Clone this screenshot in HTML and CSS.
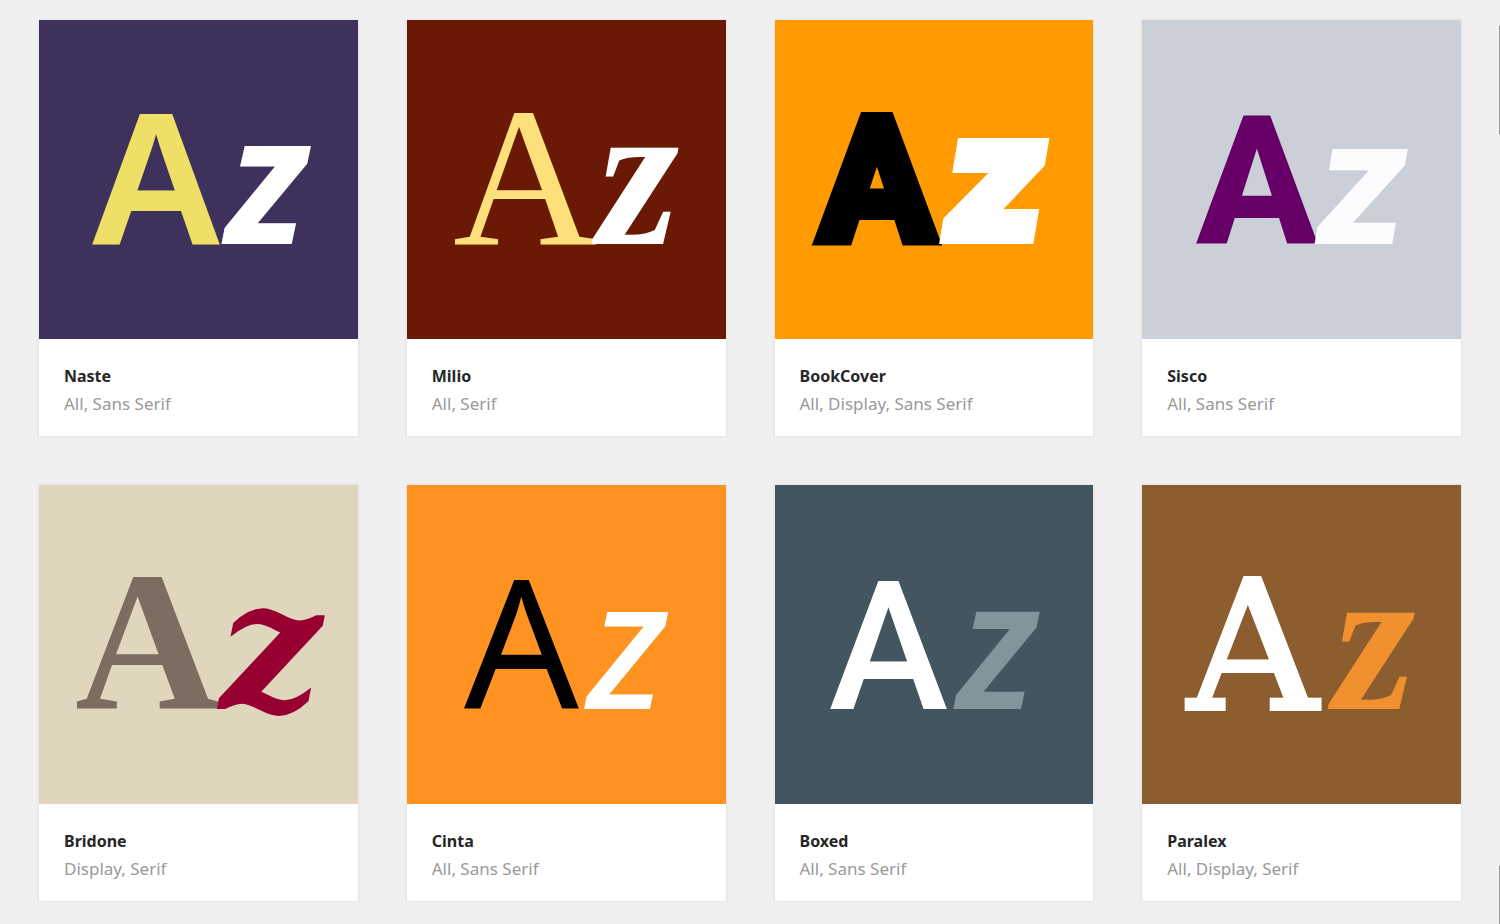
FILE: index.html
```html
<!DOCTYPE html>
<html lang="en">
  <head>
    <meta charset="UTF-8" />
    <meta name="viewport" content="width=device-width, initial-scale=1.0" />
    <title>Fonts</title>
    <link rel="stylesheet" href="styles.css">
  </head>
  <body>
    <main class="fonts">
      <a class="card" href="#naste">
        <div class="sample naste">
          <div class="letters"><span class="upper">A</span><span class="lower">z</span></div>
        </div>
        <div class="info">
          <h2>Naste</h2>
          <p>All, Sans Serif</p>
        </div>
      </a>
      <a class="card" href="#milio">
        <div class="sample milio">
          <div class="letters"><span class="upper">A</span><span class="lower">z</span></div>
        </div>
        <div class="info">
          <h2>Milio</h2>
          <p>All, Serif</p>
        </div>
      </a>
      <a class="card" href="#bookcover">
        <div class="sample bookcover">
          <div class="letters"><span class="upper">A</span><span class="lower">z</span></div>
        </div>
        <div class="info">
          <h2>BookCover</h2>
          <p>All, Display, Sans Serif</p>
        </div>
      </a>
      <a class="card" href="#sisco">
        <div class="sample sisco">
          <div class="letters"><span class="upper">A</span><span class="lower">z</span></div>
        </div>
        <div class="info">
          <h2>Sisco</h2>
          <p>All, Sans Serif</p>
        </div>
      </a>
      <a class="card" href="#bridone">
        <div class="sample bridone">
          <div class="letters"><span class="upper">A</span><span class="lower">z</span></div>
        </div>
        <div class="info">
          <h2>Bridone</h2>
          <p>Display, Serif</p>
        </div>
      </a>
      <a class="card" href="#cinta">
        <div class="sample cinta">
          <div class="letters"><span class="upper">A</span><span class="lower">z</span></div>
        </div>
        <div class="info">
          <h2>Cinta</h2>
          <p>All, Sans Serif</p>
        </div>
      </a>
      <a class="card" href="#boxed">
        <div class="sample boxed">
          <div class="letters"><span class="upper">A</span><span class="lower">z</span></div>
        </div>
        <div class="info">
          <h2>Boxed</h2>
          <p>All, Sans Serif</p>
        </div>
      </a>
      <a class="card" href="#paralex">
        <div class="sample paralex">
          <div class="letters"><span class="upper">A</span><span class="lower">z</span></div>
        </div>
        <div class="info">
          <h2>Paralex</h2>
          <p>All, Display, Serif</p>
        </div>
      </a>
    </main>
    <div class="edge edge-top"></div>
    <div class="edge edge-bottom"></div>
  </body>
</html>
```
FILE: styles.css
```css
* {
  box-sizing: border-box;
}

body {
  margin: 0;
  position: relative;
  background-color: #f0f0f0;
  font-family: "Noto Sans", "Open Sans", sans-serif;
}

.fonts {
  display: grid;
  grid-template-columns: repeat(4, 1fr);
  gap: 49px;
  padding: 20px 39px 23px;
}

.card {
  display: block;
  background-color: #fff;
  box-shadow: 0 0 3px rgba(0, 0, 0, 0.1);
  color: inherit;
  text-decoration: none;
}

.sample {
  display: flex;
  align-items: center;
  justify-content: center;
  aspect-ratio: 1;
}

/* the line takes its baseline from here, whatever the fonts of the letters */
.letters {
  font-family: Inter, sans-serif;
  font-size: 180px;
  line-height: 180px;
  white-space: nowrap;
}

.letters span {
  line-height: 0;
}

.lower {
  font-style: italic;
}

.naste {
  background-color: #3e315b;
}

.naste .upper {
  color: #eee067;
  font-family: "Liberation Sans", sans-serif;
  font-size: 190px;
  font-weight: 700;
}

.naste .lower {
  color: #fff;
  font-family: "Noto Sans", sans-serif;
  font-weight: 700;
}

.milio {
  background-color: #6a1904;
}

.milio .upper {
  color: #fee07b;
  font-family: "Liberation Serif", serif;
  font-size: 200px;
}

.milio .lower {
  color: #fff;
  font-family: "Liberation Serif", serif;
  font-size: 210px;
  font-weight: 700;
}

.bookcover {
  padding-bottom: 8px;
  background-color: #ff9a00;
}

.bookcover .upper {
  color: #000;
  font-family: Roboto, sans-serif;
  font-size: 170px;
  font-weight: 700;
  -webkit-text-stroke: 12px #000;
}

.bookcover .lower {
  margin-left: 8px;
  color: #fff;
  font-weight: 900;
  -webkit-text-stroke: 8px #fff;
}

.sisco {
  background-color: #cbcfd7;
}

.sisco .upper {
  color: #660066;
  font-family: Roboto, sans-serif;
  font-weight: 800;
}

.sisco .lower {
  color: #fcfbfe;
  font-family: Roboto, sans-serif;
  font-weight: 800;
}

.bridone {
  background-color: #e0d6bd;
}

.bridone .upper {
  color: #7c6d60;
  font-family: "Liberation Serif", serif;
  font-size: 200px;
  font-weight: 700;
}

.bridone .lower {
  color: #980032;
  font-family: "DejaVu Serif", serif;
  font-weight: 700;
}

.cinta {
  background-color: #ff9322;
}

.cinta .upper {
  color: #000;
  font-family: "Noto Sans", sans-serif;
}

.cinta .lower {
  margin-left: 8px;
  color: #fff;
  font-family: "Noto Sans", sans-serif;
  font-weight: 500;
}

.boxed {
  background-color: #43565f;
}

.boxed .upper {
  color: #fff;
  font-family: Roboto, sans-serif;
  font-weight: 500;
}

.boxed .lower {
  margin-left: 8px;
  color: #82959c;
  font-family: "Noto Sans", sans-serif;
  font-weight: 600;
}

.paralex {
  background-color: #8b5d2f;
}

.paralex .upper {
  color: #fff;
  font-family: "DejaVu Serif", serif;
  -webkit-text-stroke: 4px #fff;
}

.paralex .lower {
  margin-left: 16px;
  color: #f0902e;
  font-family: "Liberation Serif", serif;
  font-size: 210px;
  font-weight: 700;
}

.info {
  padding: 23px 25px 18px;
}

.info h2,
.info p {
  margin: 0;
  line-height: 28px;
}

.info h2 {
  color: #262626;
  font-size: 16px;
  font-weight: 700;
}

.info p {
  color: #999;
  font-size: 17px;
}

/* slivers of the neighbouring panel at the right border */
.edge {
  position: absolute;
  right: 0;
  width: 1px;
  background-color: #999;
}

.edge-top {
  top: 26px;
  height: 108px;
}

.edge-bottom {
  bottom: 0;
  height: 58px;
}
```
